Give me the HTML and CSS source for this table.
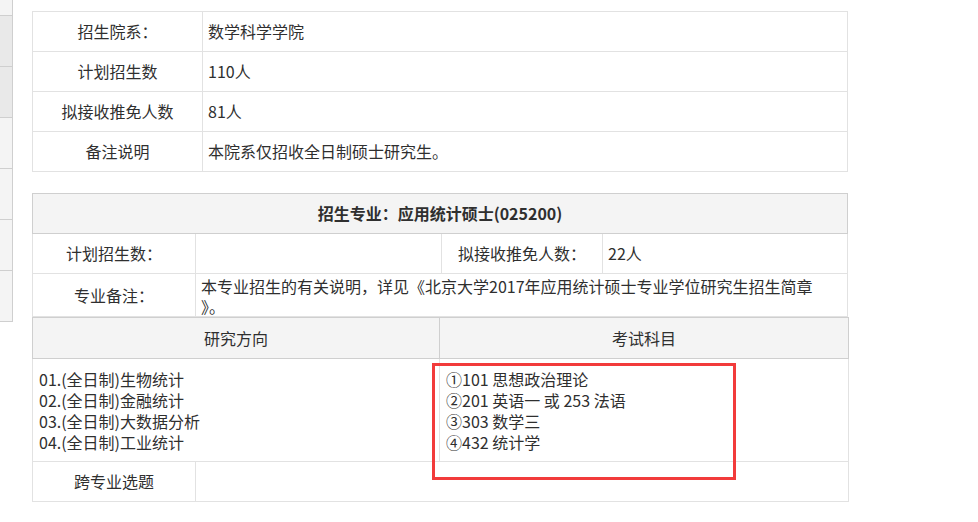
FILE: index.html
```html
<!DOCTYPE html>
<html lang="zh-CN">
<head>
<meta charset="utf-8">
<title>招生专业</title>
<link rel="stylesheet" href="styles.css">
</head>
<body>
<aside class="side">
  <div class="side-item side-first"></div>
  <div class="side-item side-dark"></div>
  <div class="side-item side-dark"></div>
  <div class="side-item"></div>
  <div class="side-item"></div>
  <div class="side-item"></div>
  <div class="side-item"></div>
</aside>
<main class="content">
  <table class="grid info">
    <colgroup><col class="c-info-label"><col></colgroup>
    <tr><td class="label">招生院系：</td><td>数学科学学院</td></tr>
    <tr><td class="label">计划招生数</td><td>110人</td></tr>
    <tr><td class="label">拟接收推免人数</td><td>81人</td></tr>
    <tr><td class="label">备注说明</td><td>本院系仅招收全日制硕士研究生。</td></tr>
  </table>

  <table class="grid major">
    <colgroup><col class="c1"><col class="c2"><col class="c3"><col></colgroup>
    <tr><th class="head" colspan="4">招生专业：应用统计硕士(025200)</th></tr>
    <tr><td class="label">计划招生数：</td><td></td><td class="label">拟接收推免人数：</td><td>22人</td></tr>
    <tr class="note-row"><td class="label">专业备注：</td><td class="note" colspan="3">本专业招生的有关说明，详见《北京大学2017年应用统计硕士专业学位研究生招生简章》。</td></tr>
  </table>

  <div class="exam-wrap">
    <table class="grid exam">
      <colgroup><col class="e1"><col class="e2"><col></colgroup>
      <tr><th class="subhead" colspan="2">研究方向</th><th class="subhead">考试科目</th></tr>
      <tr class="list-row">
        <td colspan="2" class="list">01.(全日制)生物统计<br>02.(全日制)金融统计<br>03.(全日制)大数据分析<br>04.(全日制)工业统计</td>
        <td class="list">①101 思想政治理论<br>②201 英语一 或 253 法语<br>③303 数学三<br>④432 统计学</td>
      </tr>
      <tr><td class="label">跨专业选题</td><td colspan="2"></td></tr>
    </table>
    <div class="highlight"></div>
  </div>
</main>
</body>
</html>
```

FILE: styles.css
```css
html, body {
  margin: 0;
  padding: 0;
  background: #fff;
}

body {
  display: flex;
  align-items: flex-start;
  font-family: "Noto Sans CJK SC", "Microsoft YaHei", sans-serif;
  font-size: 16px;
  line-height: 21px;
  color: #2f2f2f;
}

.side {
  width: 12px;
  flex: none;
  border-right: 1px solid #cfcfcf;
  background: #f4f4f4;
}

.side-item {
  height: 50px;
  border-bottom: 1px solid #cfcfcf;
}

.side-first {
  height: 15px;
}

.side-dark {
  background: #e9e9e9;
}

.content {
  position: relative;
  padding: 11px 0 0 19px;
}

.grid {
  border-collapse: collapse;
  table-layout: fixed;
}

.grid td,
.grid th {
  border: 1px solid #e2e2e2;
  height: 39px;
  padding: 0 5px;
  text-align: left;
  vertical-align: middle;
  font-weight: normal;
}

.grid .label {
  text-align: center;
}

.info {
  width: 816px;
}

.c-info-label {
  width: 170px;
}

.major {
  width: 816px;
  margin-top: 21px;
}

.c1 { width: 163px; }
.c2 { width: 246px; }
.c3 { width: 161px; }

.grid .head {
  background: #f4f4f4;
  border-color: #cfcfcf;
  text-align: center;
  font-weight: bold;
}

.note-row td {
  height: 40px;
}

.grid .note {
  vertical-align: top;
  padding: 2px 30px 0 5px;
  line-height: 20px;
  line-break: anywhere;
}

.exam-wrap {
  position: relative;
}

.exam {
  width: 817px;
}

.e1 { width: 163px; }
.e2 { width: 244px; }

.grid .subhead {
  background: #f4f4f4;
  border-color: #cfcfcf;
  text-align: center;
  height: 40px;
}

.grid .list {
  vertical-align: top;
  padding: 10px 6px 8px 6px;
  height: auto;
}

.highlight {
  position: absolute;
  left: 400px;
  top: 46px;
  width: 298px;
  height: 111px;
  border: 3px solid #f23b3b;
}
```
